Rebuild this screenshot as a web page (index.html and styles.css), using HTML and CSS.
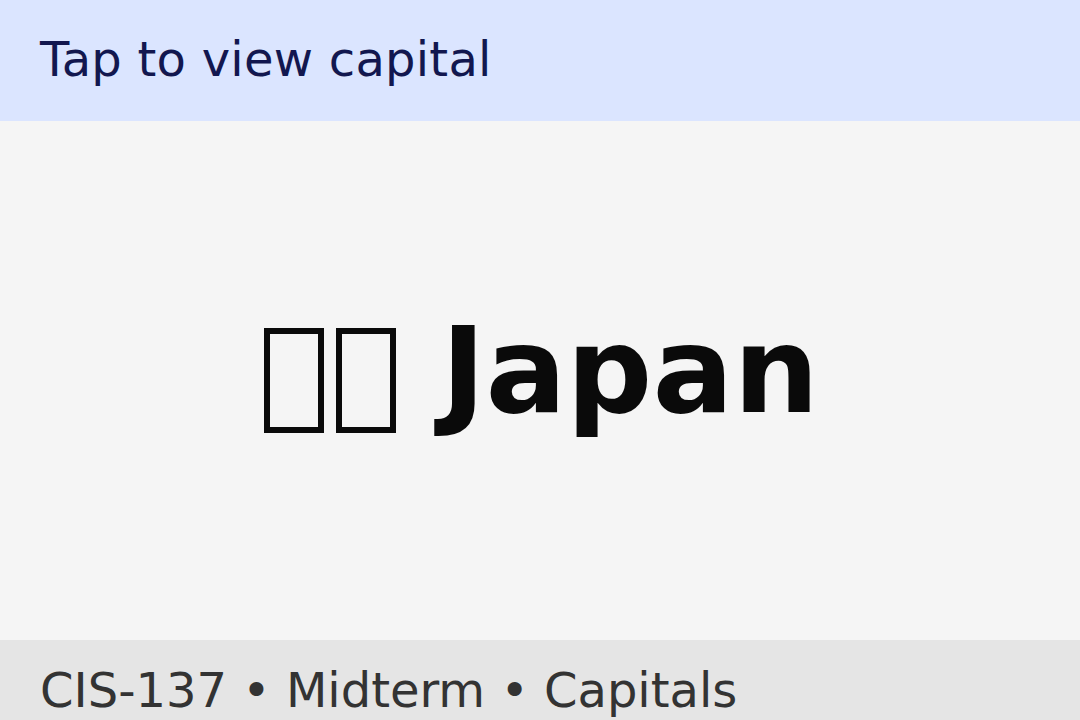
FILE: index.html
```html
<!DOCTYPE html>
<html lang="en">
<head>
<meta charset="utf-8">
<title>Flashcard</title>
<link rel="stylesheet" href="styles.css">
</head>
<body>
<div class="app">
  <header class="hint">Tap to view capital</header>
  <main class="card">
    <div class="country"><span class="flag" role="img" aria-label="🇯🇵" title="🇯🇵"><span class="tofu"></span><span class="tofu"></span></span> <span class="name">Japan</span></div>
  </main>
  <footer class="meta">CIS-137 • Midterm • Capitals</footer>
</div>
</body>
</html>
```
FILE: styles.css
```css
html, body {
  margin: 0;
  padding: 0;
}
body {
  font-family: "DejaVu Sans", sans-serif;
  background: #f5f5f5;
  overflow: hidden;
}
.app {
  height: 720px;
  display: grid;
  grid-template-rows: 121px 1fr 80px;
}
.hint {
  background: #dbe5ff;
  color: #12174f;
  font-size: 48px;
  letter-spacing: 0.25px;
  padding: 31px 40px 0;
  box-sizing: border-box;
}
.card {
  background: #f5f5f5;
  display: flex;
  align-items: center;
  justify-content: center;
  padding-bottom: 20px;
}
.country {
  font-size: 120px;
  font-weight: bold;
  color: #0a0a0a;
  white-space: nowrap;
}
.flag {
  display: inline-flex;
  gap: 12px;
  vertical-align: -21px;
  margin: 0 3px;
}
.tofu {
  display: block;
  width: 60px;
  height: 105px;
  border: 6.5px solid #0a0a0a;
  box-sizing: border-box;
}
.meta {
  background: #e5e5e5;
  color: #333333;
  font-size: 48px;
  padding: 22px 40px 0;
  box-sizing: border-box;
  white-space: nowrap;
}
```
